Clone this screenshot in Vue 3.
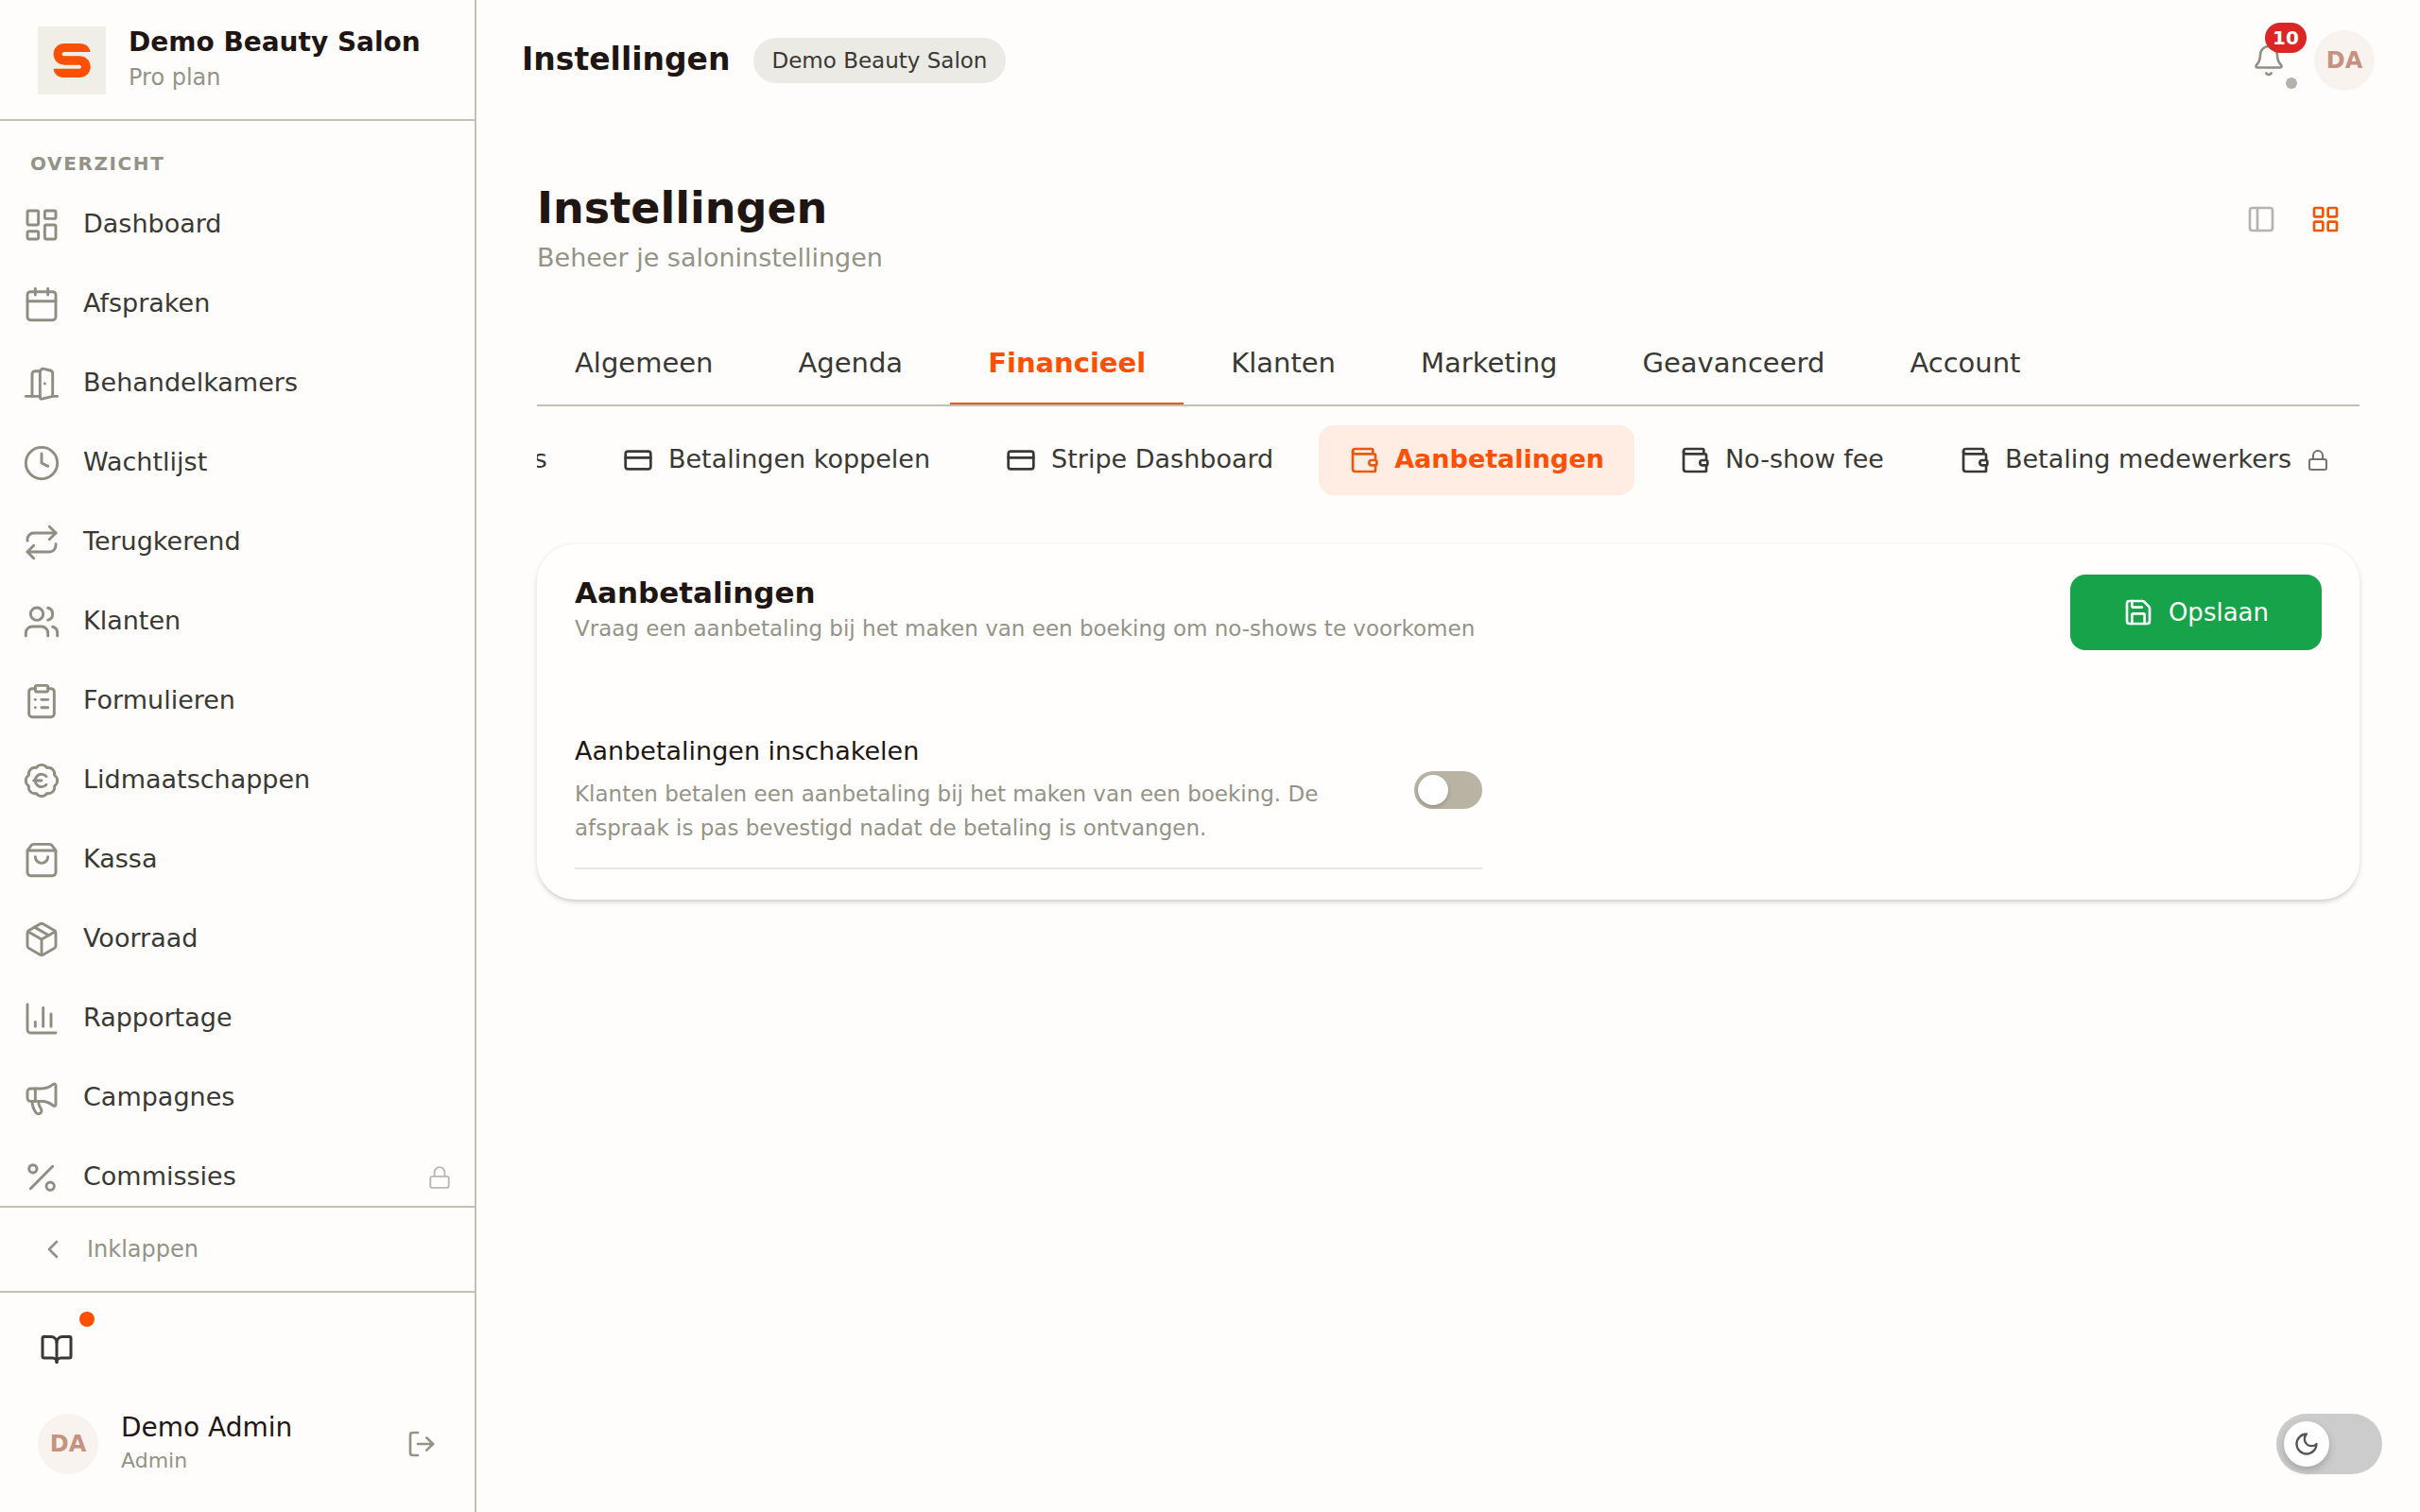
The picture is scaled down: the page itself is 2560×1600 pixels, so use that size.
<script setup>
import { ref, h } from 'vue'

// Lijniconen op een raster van 24x24
const icons = {
    dashboard: ['M4 3h5a1 1 0 0 1 1 1v7a1 1 0 0 1-1 1H4a1 1 0 0 1-1-1V4a1 1 0 0 1 1-1z', 'M15 3h5a1 1 0 0 1 1 1v3a1 1 0 0 1-1 1h-5a1 1 0 0 1-1-1V4a1 1 0 0 1 1-1z', 'M15 12h5a1 1 0 0 1 1 1v7a1 1 0 0 1-1 1h-5a1 1 0 0 1-1-1v-7a1 1 0 0 1 1-1z', 'M4 16h5a1 1 0 0 1 1 1v3a1 1 0 0 1-1 1H4a1 1 0 0 1-1-1v-3a1 1 0 0 1 1-1z'],
    calendar: ['M8 2v4', 'M16 2v4', 'M5 4h14a2 2 0 0 1 2 2v14a2 2 0 0 1-2 2H5a2 2 0 0 1-2-2V6a2 2 0 0 1 2-2z', 'M3 10h18'],
    door: ['M11 20H2', 'M11 4.562v16.157a1 1 0 0 0 1.242.97L19 20V5.562a2 2 0 0 0-1.515-1.94l-4-1A2 2 0 0 0 11 4.561z', 'M11 4H8a2 2 0 0 0-2 2v14', 'M14 12h.01', 'M22 20h-3'],
    clock: ['M12 2a10 10 0 1 0 0 20 10 10 0 0 0 0-20z', 'M12 6v6l4 2'],
    repeat: ['m17 2 4 4-4 4', 'M3 11v-1a4 4 0 0 1 4-4h14', 'm7 22-4-4 4-4', 'M21 13v1a4 4 0 0 1-4 4H3'],
    users: ['M16 21v-2a4 4 0 0 0-4-4H6a4 4 0 0 0-4 4v2', 'M9 3a4 4 0 1 0 0 8 4 4 0 0 0 0-8z', 'M22 21v-2a4 4 0 0 0-3-3.87', 'M16 3.13a4 4 0 0 1 0 7.75'],
    clipboard: ['M9 2h6a1 1 0 0 1 1 1v2a1 1 0 0 1-1 1H9a1 1 0 0 1-1-1V3a1 1 0 0 1 1-1z', 'M16 4h2a2 2 0 0 1 2 2v14a2 2 0 0 1-2 2H6a2 2 0 0 1-2-2V6a2 2 0 0 1 2-2h2', 'M12 11h4', 'M12 16h4', 'M8 11h.01', 'M8 16h.01'],
    badgeEuro: ['M3.85 8.62a4 4 0 0 1 4.78-4.77 4 4 0 0 1 6.74 0 4 4 0 0 1 4.78 4.78 4 4 0 0 1 0 6.74 4 4 0 0 1-4.77 4.78 4 4 0 0 1-6.75 0 4 4 0 0 1-4.78-4.77 4 4 0 0 1 0-6.76Z', 'M7 12h5', 'M15 9.4a4 4 0 1 0 0 5.2'],
    bag: ['M16 10a4 4 0 0 1-8 0', 'M3.103 6.034h17.794', 'M3.4 5.467a2 2 0 0 0-.4 1.2V20a2 2 0 0 0 2 2h14a2 2 0 0 0 2-2V6.667a2 2 0 0 0-.4-1.2l-2-2.667A2 2 0 0 0 17 2H7a2 2 0 0 0-1.6.8z'],
    package: ['M11 21.73a2 2 0 0 0 2 0l7-4A2 2 0 0 0 21 16V8a2 2 0 0 0-1-1.73l-7-4a2 2 0 0 0-2 0l-7 4A2 2 0 0 0 3 8v8a2 2 0 0 0 1 1.73z', 'M12 22V12', 'M3.29 7 12 12l8.71-5', 'm7.5 4.27 9 5.15'],
    chart: ['M3 3v16a2 2 0 0 0 2 2h16', 'M18 17V9', 'M13 17V5', 'M8 17v-3'],
    megaphone: ['M11 6a13 13 0 0 0 8.4-2.8A1 1 0 0 1 21 4v12a1 1 0 0 1-1.6.8A13 13 0 0 0 11 14H5a2 2 0 0 1-2-2V8a2 2 0 0 1 2-2z', 'M6 14a12 12 0 0 0 2.4 7.2 2 2 0 0 0 3.2-2.4A8 8 0 0 1 10 14', 'M8 6v8'],
    percent: ['M19 5 5 19', 'M6.5 4a2.5 2.5 0 1 0 0 5 2.5 2.5 0 0 0 0-5z', 'M17.5 15a2.5 2.5 0 1 0 0 5 2.5 2.5 0 0 0 0-5z'],
    lock: ['M5 11h14a2 2 0 0 1 2 2v7a2 2 0 0 1-2 2H5a2 2 0 0 1-2-2v-7a2 2 0 0 1 2-2z', 'M7 11V7a5 5 0 0 1 10 0v4'],
    chevronLeft: ['m15 18-6-6 6-6'],
    book: ['M12 7v14', 'M3 18a1 1 0 0 1-1-1V4a1 1 0 0 1 1-1h5a4 4 0 0 1 4 4 4 4 0 0 1 4-4h5a1 1 0 0 1 1 1v13a1 1 0 0 1-1 1h-6a3 3 0 0 0-3 3 3 3 0 0 0-3-3z'],
    logout: ['M9 21H5a2 2 0 0 1-2-2V5a2 2 0 0 1 2-2h4', 'm16 17 5-5-5-5', 'M21 12H9'],
    bell: ['M10.268 21a2 2 0 0 0 3.464 0', 'M3.262 15.326A1 1 0 0 0 4 17h16a1 1 0 0 0 .74-1.673C19.41 13.956 18 12.499 18 8A6 6 0 0 0 6 8c0 4.499-1.411 5.956-2.738 7.326'],
    panel: ['M5 3h14a2 2 0 0 1 2 2v14a2 2 0 0 1-2 2H5a2 2 0 0 1-2-2V5a2 2 0 0 1 2-2z', 'M9 3v18'],
    grid: ['M4 3h5a1 1 0 0 1 1 1v5a1 1 0 0 1-1 1H4a1 1 0 0 1-1-1V4a1 1 0 0 1 1-1z', 'M15 3h5a1 1 0 0 1 1 1v5a1 1 0 0 1-1 1h-5a1 1 0 0 1-1-1V4a1 1 0 0 1 1-1z', 'M15 14h5a1 1 0 0 1 1 1v5a1 1 0 0 1-1 1h-5a1 1 0 0 1-1-1v-5a1 1 0 0 1 1-1z', 'M4 14h5a1 1 0 0 1 1 1v5a1 1 0 0 1-1 1H4a1 1 0 0 1-1-1v-5a1 1 0 0 1 1-1z'],
    card: ['M4 5h16a2 2 0 0 1 2 2v10a2 2 0 0 1-2 2H4a2 2 0 0 1-2-2V7a2 2 0 0 1 2-2z', 'M2 10h20'],
    wallet: ['M19 7V4a1 1 0 0 0-1-1H5a2 2 0 0 0 0 4h15a1 1 0 0 1 1 1v4h-3a2 2 0 0 0 0 4h3a1 1 0 0 0 1-1v-2a1 1 0 0 0-1-1', 'M3 5v14a2 2 0 0 0 2 2h15a1 1 0 0 0 1-1v-4'],
    save: ['M15.2 3a2 2 0 0 1 1.4.6l3.8 3.8a2 2 0 0 1 .6 1.4V19a2 2 0 0 1-2 2H5a2 2 0 0 1-2-2V5a2 2 0 0 1 2-2z', 'M17 21v-7a1 1 0 0 0-1-1H8a1 1 0 0 0-1 1v7', 'M7 3v4a1 1 0 0 0 1 1h7'],
    moon: ['M12 3a6 6 0 0 0 9 9 9 9 0 1 1-9-9Z'],
}

const Icon = ({ name, size = 32, stroke = 2 }) => h('svg', {
    class: 'icon',
    width: size,
    height: size,
    viewBox: '0 0 24 24',
    fill: 'none',
    stroke: 'currentColor',
    'stroke-width': stroke,
    'stroke-linecap': 'round',
    'stroke-linejoin': 'round',
    'aria-hidden': 'true',
}, icons[name].map((d) => h('path', { d })))
Icon.props = ['name', 'size', 'stroke']

const navItems = [
    { label: 'Dashboard', icon: 'dashboard' },
    { label: 'Afspraken', icon: 'calendar' },
    { label: 'Behandelkamers', icon: 'door' },
    { label: 'Wachtlijst', icon: 'clock' },
    { label: 'Terugkerend', icon: 'repeat' },
    { label: 'Klanten', icon: 'users' },
    { label: 'Formulieren', icon: 'clipboard' },
    { label: 'Lidmaatschappen', icon: 'badgeEuro' },
    { label: 'Kassa', icon: 'bag' },
    { label: 'Voorraad', icon: 'package' },
    { label: 'Rapportage', icon: 'chart' },
    { label: 'Campagnes', icon: 'megaphone' },
    { label: 'Commissies', icon: 'percent', locked: true },
]

const tabs = ['Algemeen', 'Agenda', 'Financieel', 'Klanten', 'Marketing', 'Geavanceerd', 'Account']
const subTabs = [
    { label: 'Abonnementsprijs', icon: 'card' },
    { label: 'Betalingen koppelen', icon: 'card' },
    { label: 'Stripe Dashboard', icon: 'card' },
    { label: 'Aanbetalingen', icon: 'wallet' },
    { label: 'No-show fee', icon: 'wallet' },
    { label: 'Betaling medewerkers', icon: 'wallet', locked: true },
]

const activeTab = ref('Financieel')
const activeSubTab = ref('Aanbetalingen')
const view = ref('grid')
const depositEnabled = ref(false)
const darkMode = ref(false)
</script>

<template>
    <div class="app">
        <aside class="sidebar">
            <div class="brand">
                <svg class="brand-logo" viewBox="0 0 216 216" role="img" aria-label="Logo">
                    <path fill="#ff4f00" d="M85 54H131C150 54 166 64 166 81H85C74 81 74 94 85 94H131C151 94 167 108 167 128C167 148 151 162 131 162H85C66 162 51 152 50 134H132C140 134 140 122 132 122H85C65 122 50 108 50 88C50 68 65 54 85 54Z" />
                </svg>
                <div>
                    <div class="brand-name">Demo Beauty Salon</div>
                    <div class="brand-plan">Pro plan</div>
                </div>
            </div>

            <nav class="nav">
                <div class="nav-heading">OVERZICHT</div>
                <a v-for="item in navItems" :key="item.label" class="nav-item" href="#">
                    <Icon :name="item.icon" :size="40" :stroke="1.75" />
                    <span class="item-label">{{ item.label }}</span>
                    <span v-if="item.locked" class="nav-lock">
                        <Icon name="lock" :size="26" :stroke="1.75" />
                    </span>
                </a>
            </nav>

            <button class="collapse" type="button">
                <Icon name="chevronLeft" />
                <span>Inklappen</span>
            </button>

            <div class="sidebar-footer">
                <button class="guide-button" type="button" aria-label="Handleiding">
                    <Icon name="book" :size="36" />
                    <span class="guide-dot" />
                </button>
                <div class="user">
                    <span class="avatar">DA</span>
                    <div class="user-text">
                        <div class="user-name">Demo Admin</div>
                        <div class="user-role">Admin</div>
                    </div>
                    <button class="logout" type="button" aria-label="Uitloggen">
                        <Icon name="logout" />
                    </button>
                </div>
            </div>
        </aside>

        <div class="main">
            <header class="topbar">
                <div class="topbar-title">Instellingen</div>
                <span class="chip">Demo Beauty Salon</span>
                <div class="topbar-actions">
                    <button class="bell" type="button" aria-label="Meldingen">
                        <Icon name="bell" :size="36" :stroke="1.75" />
                        <span class="bell-count">10</span>
                        <span class="bell-status" />
                    </button>
                    <span class="avatar">DA</span>
                </div>
            </header>

            <main class="content">
                <div class="page-head">
                    <div>
                        <h1>Instellingen</h1>
                        <p class="page-subtitle">Beheer je saloninstellingen</p>
                    </div>
                    <div class="view-switch">
                        <button type="button" :class="{ active: view === 'panel' }" aria-label="Zijpaneel" @click="view = 'panel'">
                            <Icon name="panel" />
                        </button>
                        <button type="button" :class="{ active: view === 'grid' }" aria-label="Raster" @click="view = 'grid'">
                            <Icon name="grid" />
                        </button>
                    </div>
                </div>

                <div class="tabs">
                    <button v-for="tab in tabs" :key="tab" type="button" class="tab" :class="{ active: tab === activeTab }"
                        @click="activeTab = tab">{{ tab }}</button>
                </div>

                <!-- Subtabs staan naar het einde gescrold -->
                <div class="subtabs">
                    <button v-for="tab in subTabs" :key="tab.label" type="button" class="subtab"
                        :class="{ active: tab.label === activeSubTab }" @click="activeSubTab = tab.label">
                        <Icon :name="tab.icon" />
                        <span class="item-label">{{ tab.label }}</span>
                        <span v-if="tab.locked" class="subtab-lock">
                            <Icon name="lock" :size="24" />
                        </span>
                    </button>
                </div>

                <section class="card">
                    <div class="card-head">
                        <div>
                            <h2>Aanbetalingen</h2>
                            <p class="card-subtitle">Vraag een aanbetaling bij het maken van een boeking om no-shows te voorkomen</p>
                        </div>
                        <button class="save" type="button">
                            <Icon name="save" />
                            <span>Opslaan</span>
                        </button>
                    </div>

                    <div class="setting">
                        <div class="setting-text">
                            <label class="setting-title" for="deposit">Aanbetalingen inschakelen</label>
                            <p class="setting-desc">Klanten betalen een aanbetaling bij het maken van een boeking. De afspraak is pas bevestigd nadat de betaling is ontvangen.</p>
                        </div>
                        <input id="deposit" v-model="depositEnabled" class="switch" type="checkbox" role="switch">
                    </div>
                </section>
            </main>
        </div>

        <label class="theme-toggle">
            <input v-model="darkMode" type="checkbox" role="switch" aria-label="Donkere modus">
            <span class="theme-knob">
                <Icon name="moon" :size="28" />
            </span>
        </label>
    </div>
</template>

<style>
body {
    margin: 0;
    background: #fefdfb;
}
</style>

<style scoped>
.app {
    display: flex;
    height: 100vh;
    overflow: hidden;
    background: #fefdfb;
    color: #1f1614;
    font-family: "DejaVu Sans", sans-serif;
    font-size: 27px;
}

.app *,
.app *::before {
    box-sizing: border-box;
}

button {
    padding: 0;
    border: 0;
    background: none;
    color: inherit;
    font: inherit;
    cursor: pointer;
}

h1,
h2,
p {
    margin: 0;
}

.icon {
    display: block;
    flex-shrink: 0;
}

.item-label {
    padding-bottom: 4px;
    white-space: nowrap;
}

.avatar {
    display: flex;
    align-items: center;
    justify-content: center;
    flex-shrink: 0;
    width: 64px;
    height: 64px;
    border-radius: 50%;
    background: #f8f3ef;
    color: #c7917f;
    font-size: 24px;
    font-weight: 700;
}

/* Zijbalk */
.sidebar {
    display: flex;
    flex-direction: column;
    flex-shrink: 0;
    width: 504px;
    border-right: 2px solid #c2c1b2;
}

.brand {
    display: flex;
    align-items: center;
    gap: 24px;
    height: 128px;
    flex-shrink: 0;
    padding: 2px 40px 0;
    border-bottom: 2px solid #c2c1b2;
}

.brand-logo {
    width: 72px;
    height: 72px;
    flex-shrink: 0;
    background: #f0eee6;
}

.brand-name {
    font-size: 28px;
    font-weight: 700;
    line-height: 36px;
    white-space: nowrap;
}

.brand-plan {
    color: #949388;
    font-size: 24px;
    line-height: 38px;
}

.nav {
    flex: 1;
    min-height: 0;
    overflow-y: auto;
    scrollbar-width: none;
}

.nav-heading {
    padding: 30px 32px 8px;
    color: #949388;
    font-size: 20px;
    font-weight: 700;
    line-height: 30px;
    letter-spacing: 0.08em;
}

.nav-item {
    display: flex;
    align-items: center;
    gap: 24px;
    height: 84px;
    padding: 0 24px;
    color: #3a3834;
    text-decoration: none;
}

.nav-item > .icon {
    color: #8f8e82;
}

.nav-lock {
    margin-left: auto;
    color: #b9b8b3;
}

.collapse {
    display: flex;
    align-items: center;
    gap: 20px;
    height: 92px;
    flex-shrink: 0;
    padding: 0 40px;
    border-top: 2px solid #c2c1b2;
    border-bottom: 2px solid #c2c1b2;
    color: #949388;
    font-size: 24px;
}

.sidebar-footer {
    display: flex;
    flex-direction: column;
    gap: 28px;
    flex-shrink: 0;
    padding: 24px 24px 36px;
}

.guide-button {
    position: relative;
    display: flex;
    align-items: center;
    justify-content: center;
    width: 72px;
    height: 72px;
    color: #3a3834;
}

.guide-dot {
    position: absolute;
    top: -4px;
    right: -4px;
    width: 16px;
    height: 16px;
    border-radius: 50%;
    background: #ff4f00;
}

.user {
    display: flex;
    align-items: center;
    gap: 24px;
    height: 72px;
    padding: 0 16px;
}

.user-text {
    flex: 1;
}

.user-name {
    font-size: 28px;
    line-height: 36px;
}

.user-role {
    color: #949388;
    font-size: 22px;
    line-height: 34px;
}

.logout {
    color: #949388;
}

/* Hoofdgedeelte */
.main {
    flex: 1;
    min-width: 0;
}

.topbar {
    display: flex;
    align-items: center;
    gap: 24px;
    height: 128px;
    padding: 0 48px;
}

.topbar-title {
    padding-bottom: 4px;
    font-size: 33px;
    font-weight: 700;
}

.chip {
    padding: 0 20px;
    border-radius: 24px;
    background: #ebeae5;
    color: #3a3834;
    font-size: 23px;
    line-height: 48px;
}

.topbar-actions {
    display: flex;
    align-items: center;
    gap: 12px;
    margin-left: auto;
}

.bell {
    position: relative;
    display: flex;
    align-items: center;
    justify-content: center;
    width: 72px;
    height: 72px;
    color: #8f8e82;
}

.bell-count {
    position: absolute;
    top: -4px;
    right: -4px;
    width: 44px;
    border-radius: 16px;
    background: #dc2626;
    color: #fff;
    font-size: 20px;
    font-weight: 700;
    line-height: 32px;
    text-align: center;
}

.bell-status {
    position: absolute;
    right: 6px;
    bottom: 6px;
    width: 12px;
    height: 12px;
    border-radius: 50%;
    background: #b3b3ae;
}

.content {
    padding: 64px;
}

.page-head {
    display: flex;
    align-items: flex-start;
    justify-content: space-between;
    margin-bottom: 48px;
}

h1 {
    font-size: 46px;
    line-height: 56px;
}

.page-subtitle {
    margin-top: 4px;
    color: #949388;
    line-height: 42px;
}

.view-switch {
    display: flex;
    gap: 4px;
    padding: 4px;
}

.view-switch button {
    display: flex;
    align-items: center;
    justify-content: center;
    width: 64px;
    height: 72px;
    color: #b5b4af;
}

.view-switch .active {
    color: #ea580c;
}

.tabs {
    display: flex;
    gap: 10px;
    border-bottom: 2px solid #c2c1b2;
}

.tab {
    padding: 20px 40px;
    border-bottom: 2px solid transparent;
    color: #3a3834;
    font-size: 29px;
    line-height: 44px;
}

.tab.active {
    border-bottom-color: #ea580c;
    color: #ff4f00;
    font-weight: 700;
}

.subtabs {
    display: flex;
    justify-content: flex-end;
    gap: 16px;
    margin-top: 20px;
    overflow: hidden;
}

.subtab {
    display: flex;
    align-items: center;
    flex-shrink: 0;
    gap: 16px;
    height: 74px;
    padding: 0 32px;
    border-radius: 16px;
    color: #3a3834;
}

.subtab.active {
    background: #ffece3;
    color: #ff4f00;
    font-weight: 700;
}

.subtab.active .icon {
    color: #ea580c;
}

.subtab-lock {
    opacity: 0.7;
}

.card {
    margin-top: 52px;
    padding: 32px 40px;
    border-radius: 40px;
    background: #fffefc;
    box-shadow: 0 2px 6px rgba(0, 0, 0, 0.12), 0 4px 4px -2px rgba(0, 0, 0, 0.1);
}

.card-head {
    display: flex;
    align-items: flex-start;
    justify-content: space-between;
    margin-bottom: 66px;
}

h2 {
    font-size: 31px;
    line-height: 38px;
}

.card-subtitle {
    color: #949388;
    font-size: 23px;
    line-height: 38px;
}

.save {
    display: flex;
    align-items: center;
    gap: 16px;
    height: 80px;
    padding: 0 56px;
    border-radius: 16px;
    background: #16a34a;
    color: #fff;
    font-size: 26px;
}

.setting {
    display: flex;
    align-items: center;
    justify-content: space-between;
    gap: 48px;
    max-width: 960px;
    padding: 24px 0;
    border-bottom: 2px solid #e8e7e4;
}

.setting-text {
    max-width: 840px;
}

.setting-title {
    display: block;
    margin-bottom: 10px;
    line-height: 34px;
}

.setting-desc {
    color: #949388;
    font-size: 23px;
    line-height: 36px;
}

.switch {
    flex-shrink: 0;
    width: 72px;
    height: 40px;
    margin: 0;
    padding: 4px;
    appearance: none;
    border-radius: 20px;
    background: #b9b3a3;
    cursor: pointer;
}

.switch::before {
    content: "";
    display: block;
    width: 32px;
    height: 32px;
    border-radius: 50%;
    background: #fff;
    box-shadow: 0 2px 4px rgba(0, 0, 0, 0.2);
}

.switch:checked {
    background: #ff4f00;
}

.switch:checked::before {
    margin-left: auto;
}

.theme-toggle {
    position: fixed;
    right: 40px;
    bottom: 40px;
    display: flex;
    width: 112px;
    height: 64px;
    padding: 8px;
    border-radius: 32px;
    background: #ccc;
    cursor: pointer;
}

.theme-toggle input {
    position: absolute;
    inset: 0;
    margin: 0;
    opacity: 0;
}

.theme-knob {
    display: flex;
    align-items: center;
    justify-content: center;
    width: 48px;
    height: 48px;
    border-radius: 50%;
    background: #fff;
    color: #555;
    box-shadow: 0 4px 8px rgba(0, 0, 0, 0.2);
}

.theme-toggle input:checked + .theme-knob {
    margin-left: auto;
}
</style>
